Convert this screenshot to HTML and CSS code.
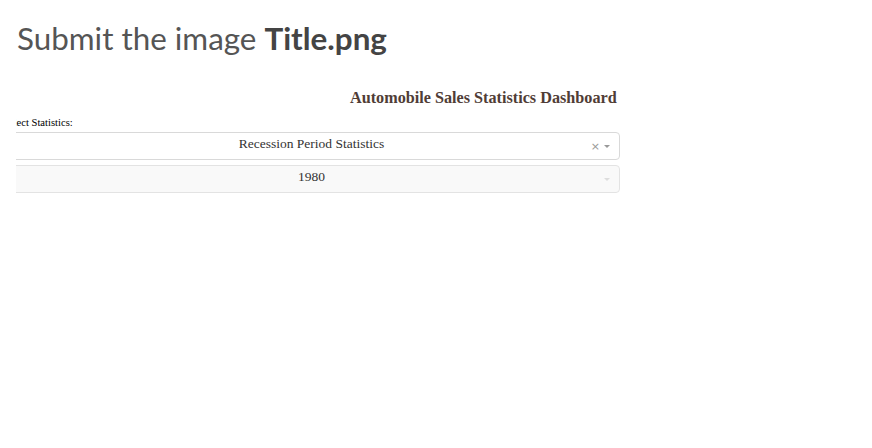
FILE: index.html
```html
<!DOCTYPE html>
<html>
<head>
<meta charset="utf-8">
<link rel="stylesheet" href="styles.css">
</head>
<body>
<h1 class="prompt">Submit the image <strong>Title.png</strong></h1>
<div class="shot">
  <div class="app">
    <h2 class="app-title">Automobile Sales Statistics Dashboard</h2>
    <label class="field-label">Select Statistics:</label>
    <div class="dropdown">
      <span class="value">Recession Period Statistics</span>
      <span class="controls">
        <span class="clear">×</span>
        <span class="arrow"></span>
      </span>
    </div>
    <div class="dropdown disabled">
      <span class="value">1980</span>
      <span class="controls">
        <span class="arrow"></span>
      </span>
    </div>
  </div>
</div>
</body>
</html>
```
FILE: styles.css
```css
html, body {
  margin: 0;
  padding: 0;
  background: #ffffff;
}
body {
  padding: 0 0 0 17px;
}
.prompt {
  margin: 0;
  padding-top: 18px;
  font-family: "Lato", "Open Sans", sans-serif;
  font-size: 31.4px;
  font-weight: 400;
  color: #555555;
  line-height: 40px;
}
.prompt strong {
  font-weight: 700;
  color: #444444;
}
.shot {
  margin-top: 31px;
  margin-left: -1px;
  width: 604px;
  overflow: hidden;
}
.app {
  margin-left: -13px;
  width: 617px;
  font-family: "Liberation Serif", "Times New Roman", serif;
}
.app-title {
  margin: 0;
  padding-left: 347px;
  font-size: 16.2px;
  font-weight: 700;
  color: #503d36;
  line-height: 18px;
  white-space: nowrap;
}
.field-label {
  display: block;
  margin-top: 10px;
  font-size: 10.6px;
  color: #000;
  line-height: 12px;
}
.dropdown {
  margin-top: 3px;
  height: 26px;
  border: 1px solid #d9d9d9;
  border-radius: 4px;
  display: flex;
  align-items: center;
  background: #fff;
}
.dropdown + .dropdown {
  margin-top: 5px;
}
.dropdown.disabled {
  background: #f9f9f9;
  border-color: #e3e3e3;
}
.value {
  flex: 1;
  text-align: center;
  font-size: 13.5px;
  color: #333;
  padding-left: 40px;
  margin-top: -4px;
}
.controls {
  display: flex;
  align-items: center;
  width: 40px;
  justify-content: flex-end;
  padding-right: 9px;
  box-sizing: border-box;
  gap: 4px;
}
.clear {
  font-family: "DejaVu Sans", sans-serif;
  font-size: 11px;
  color: #999;
  line-height: 12px;
  margin-top: 2px;
}
.arrow {
  width: 0;
  height: 0;
  border-left: 3px solid transparent;
  border-right: 3px solid transparent;
  border-top: 3px solid #999;
}
.disabled .arrow {
  border-top-color: #ddd;
}
```
